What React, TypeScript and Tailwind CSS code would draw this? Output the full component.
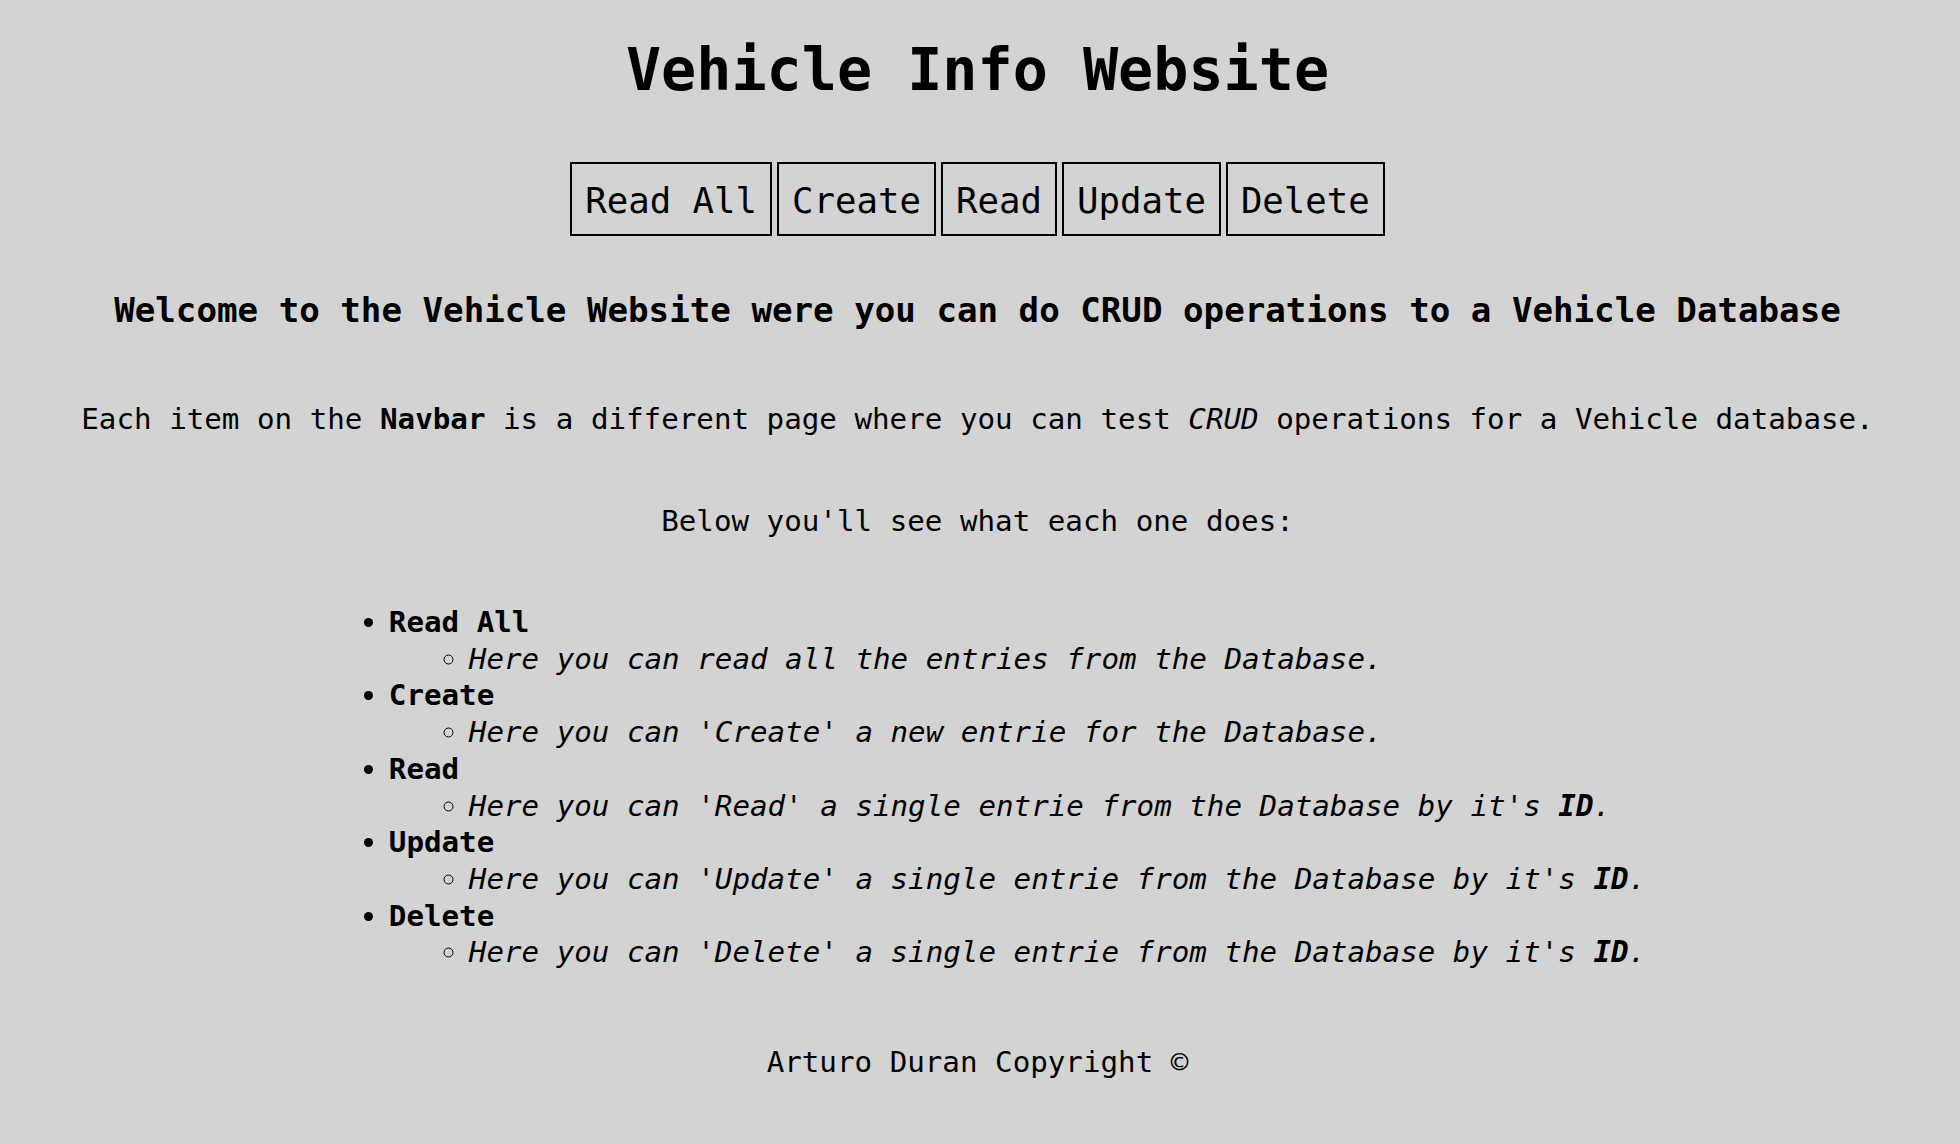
const navItems = ['Read All', 'Create', 'Read', 'Update', 'Delete']

const sections = [
  { title: 'Read All', text: <>Here you can read all the entries from the Database.</> },
  { title: 'Create', text: <>Here you can 'Create' a new entrie for the Database.</> },
  { title: 'Read', text: <>Here you can 'Read' a single entrie from the Database by it's <b>ID</b>.</> },
  { title: 'Update', text: <>Here you can 'Update' a single entrie from the Database by it's <b>ID</b>.</> },
  { title: 'Delete', text: <>Here you can 'Delete' a single entrie from the Database by it's <b>ID</b>.</> },
]

export default function App() {
  return (
    <div className="min-h-screen bg-[#d3d3d3] text-black text-center font-['DejaVu_Sans_Mono',monospace] flex flex-col items-center pr-[5px]">
      <h1 className="pt-[35px] text-[58.4px] leading-[70px] font-bold">Vehicle Info Website</h1>

      {/* navbar */}
      <nav className="mt-[57px] flex gap-[5px]">
        {navItems.map(item => (
          <button
            key={item}
            className="border-2 border-black bg-transparent px-[13px] pt-[16px] pb-[12px] text-[35.7px] leading-[42px] whitespace-pre"
          >
            {item}
          </button>
        ))}
      </nav>

      <h3 className="mt-[54px] text-[34.15px] leading-[40px] font-bold">
        Welcome to the Vehicle Website were you can do CRUD operations to a Vehicle Database
      </h3>

      <p className="mt-[71px] text-[29.2px] leading-[36px] whitespace-pre">
        Each item on the <b>Navbar</b> is a different page where you can test <i>CRUD</i> operations for a Vehicle database.
      </p>

      <p className="mt-[66px] text-[29.2px] leading-[36px] whitespace-pre">Below you'll see what each one does:</p>

      <ul className="mt-[65px] list-disc pl-[80px] text-left text-[29.2px] leading-[36.7px]">
        {sections.map(s => (
          <li key={s.title}>
            <b>{s.title}</b>
            <ul className="list-[circle] pl-[80px]">
              <li className="italic whitespace-pre">{s.text}</li>
            </ul>
          </li>
        ))}
      </ul>

      <footer className="mt-[73px] text-[29.2px] leading-[36px] whitespace-pre">Arturo Duran Copyright ©</footer>
    </div>
  )
}
